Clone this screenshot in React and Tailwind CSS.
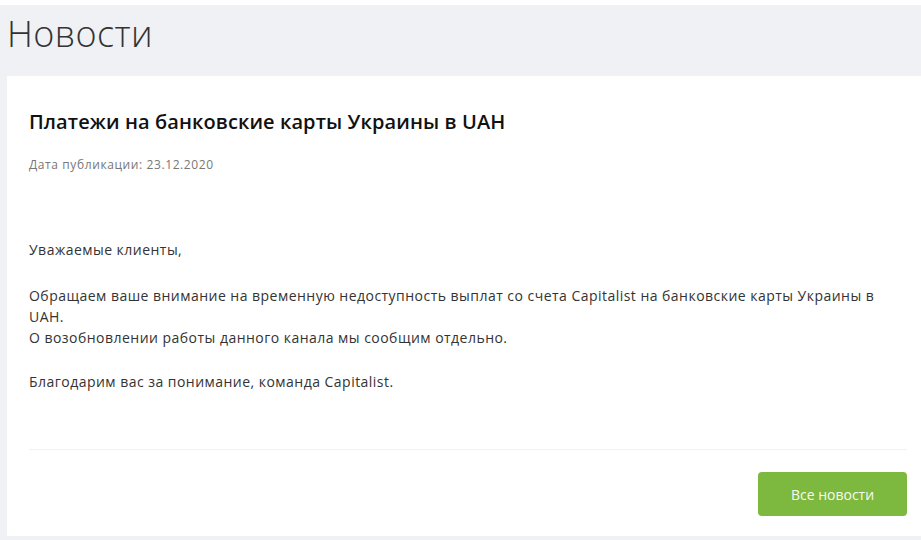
import React from 'react';

const font = { fontFamily: '"Open Sans", "Lato", sans-serif' };

export default function App() {
  return (
    <div className="w-[921px] h-[540px] overflow-hidden bg-white" style={font}>
      <div className="mt-[5px] h-[535px] bg-[#f0f1f5] flex flex-col">
        <h1 className="h-[71px] pl-[7px] pt-[7px] text-[36px] leading-[44px] font-light tracking-[0.4px] text-[#333]">Новости</h1>
        <div className="ml-[7px] h-[460px] bg-white flex flex-col px-[22px]">
          <h2 className="mt-[33px] text-[20px] leading-[26px] font-semibold tracking-[0.1px] text-[#111]">
            Платежи на банковские карты Украины в UAH
          </h2>
          <p className="mt-[22px] text-[12px] leading-[16px] tracking-[0.6px] text-[#777]">Дата публикации: 23.12.2020</p>
          <div className="mt-[66px] text-[14px] leading-[21px] tracking-[0.47px] text-[#333]">
            <p>Уважаемые клиенты,</p>
            <p className="mt-[25px]">
              Обращаем ваше внимание на временную недоступность выплат со счета Capitalist на банковские карты Украины в UAH.
              <br />
              О возобновлении работы данного канала мы сообщим отдельно.
            </p>
            <p className="mt-[23px]">Благодарим вас за понимание, команда Capitalist.</p>
          </div>
          <div className="mt-[57px] mr-[-8px] border-t border-[#f2f2f4]" />
          <div className="flex justify-end mr-[-8px] mt-[22px]">
            <button className="w-[149px] h-[44px] rounded-[4px] bg-[#7db83f] text-[#f8fbef] text-[14px]">
              Все новости
            </button>
          </div>
        </div>
      </div>
    </div>
  );
}
